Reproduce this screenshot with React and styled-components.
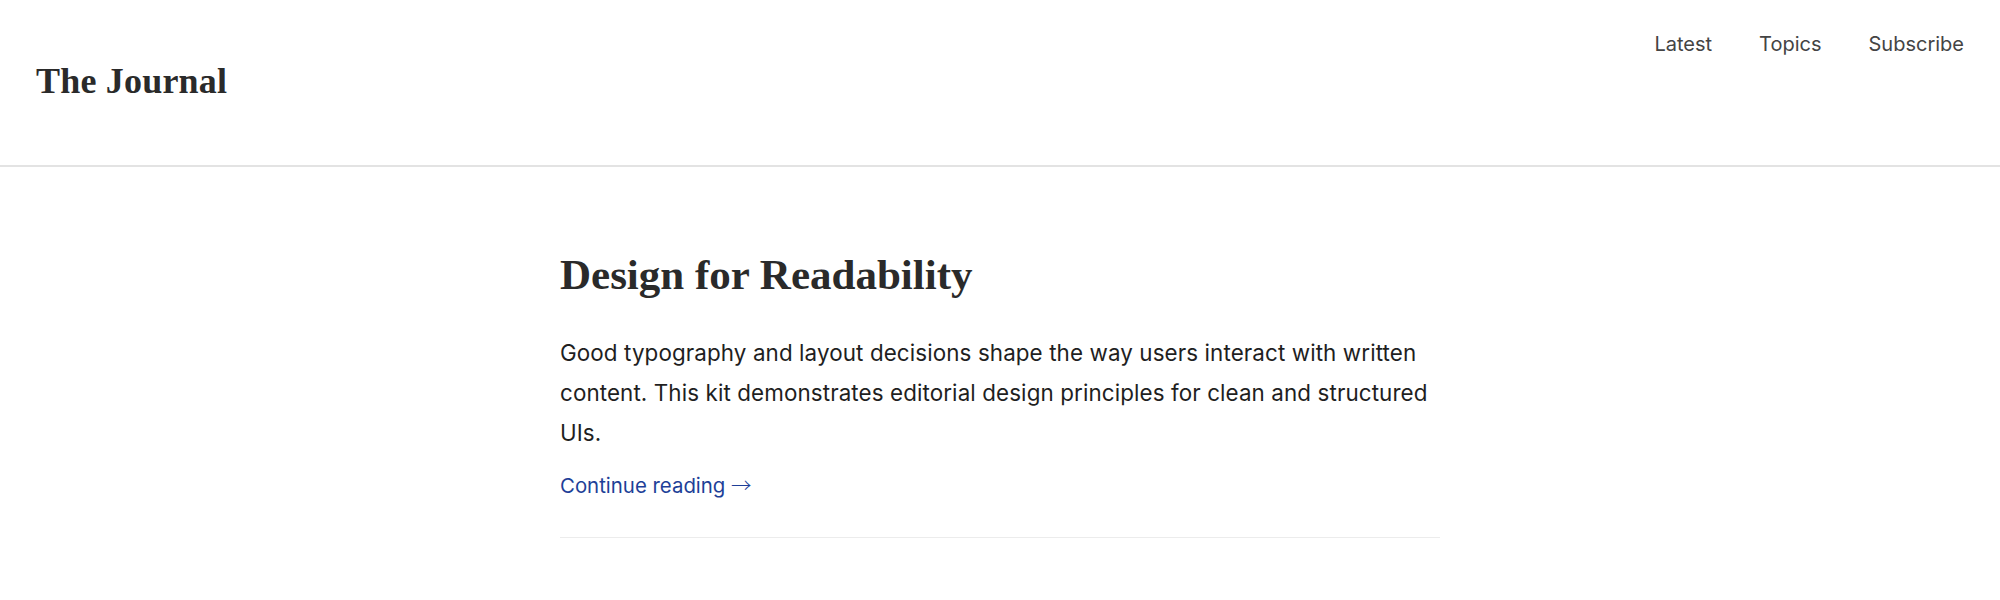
import React from 'react';
import styled, { createGlobalStyle } from 'styled-components';

const GlobalStyle = createGlobalStyle`
  html, body {
    margin: 0;
    padding: 0;
    background: #ffffff;
  }

  * {
    box-sizing: border-box;
  }
`;

const Page = styled.div`
  font-family: Inter, "Noto Sans", sans-serif;
  color: #1f1f1f;
`;

const Header = styled.header`
  display: flex;
  justify-content: space-between;
  align-items: flex-start;
  height: 167px;
  padding: 32px 36px 0;
  border-bottom: 2px solid #e3e3e3;
`;

const Logo = styled.h1`
  margin: 28px 0 0;
  font-family: "Liberation Serif", "Times New Roman", serif;
  font-weight: 700;
  font-size: 36px;
  line-height: 1.2;
  color: #2a2a2a;
  letter-spacing: 0.2px;
`;

const Nav = styled.nav`
  display: flex;
  gap: 47px;
`;

const NavLink = styled.a`
  font-size: 20px;
  line-height: normal;
  color: #444444;
  text-decoration: none;
  cursor: pointer;

  &:hover {
    color: #1e40af;
  }
`;

const Main = styled.main`
  display: flex;
  justify-content: center;
  padding: 82px 20px 0;
`;

const Article = styled.article`
  width: 100%;
  max-width: 880px;
  padding-bottom: 39px;
  border-bottom: 1px solid #ececec;
`;

const Title = styled.h2`
  margin: 0 0 32px;
  font-family: "Liberation Serif", "Times New Roman", serif;
  font-weight: 700;
  font-size: 43px;
  line-height: 1.2;
  color: #2a2a2a;
`;

const Excerpt = styled.p`
  margin: 0 0 20px;
  font-size: 22.4px;
  line-height: 40px;
  letter-spacing: 0.1px;
  color: #1f1f1f;
`;

const ReadMore = styled.a`
  display: inline-block;
  font-size: 20.4px;
  line-height: normal;
  color: #1e3f98;
  text-decoration: none;
  cursor: pointer;

  &:hover {
    text-decoration: underline;
  }
`;

const Arrow = styled.span`
  font-family: "Noto Sans CJK JP", "Noto Sans CJK SC", sans-serif;
  font-weight: 300;
  line-height: 1;
`;

const navItems = ['Latest', 'Topics', 'Subscribe'];

const App = () => {
  return (
    <Page>
      <GlobalStyle />
      <Header>
        <Logo>The Journal</Logo>
        <Nav>
          {navItems.map((item) => (
            <NavLink key={item}>{item}</NavLink>
          ))}
        </Nav>
      </Header>
      <Main>
        <Article>
          <Title>Design for Readability</Title>
          <Excerpt>
            Good typography and layout decisions shape the way users interact with written
            content. This kit demonstrates editorial design principles for clean and
            structured UIs.
          </Excerpt>
          <ReadMore>
            Continue reading <Arrow>→</Arrow>
          </ReadMore>
        </Article>
      </Main>
    </Page>
  );
};

export default App;
